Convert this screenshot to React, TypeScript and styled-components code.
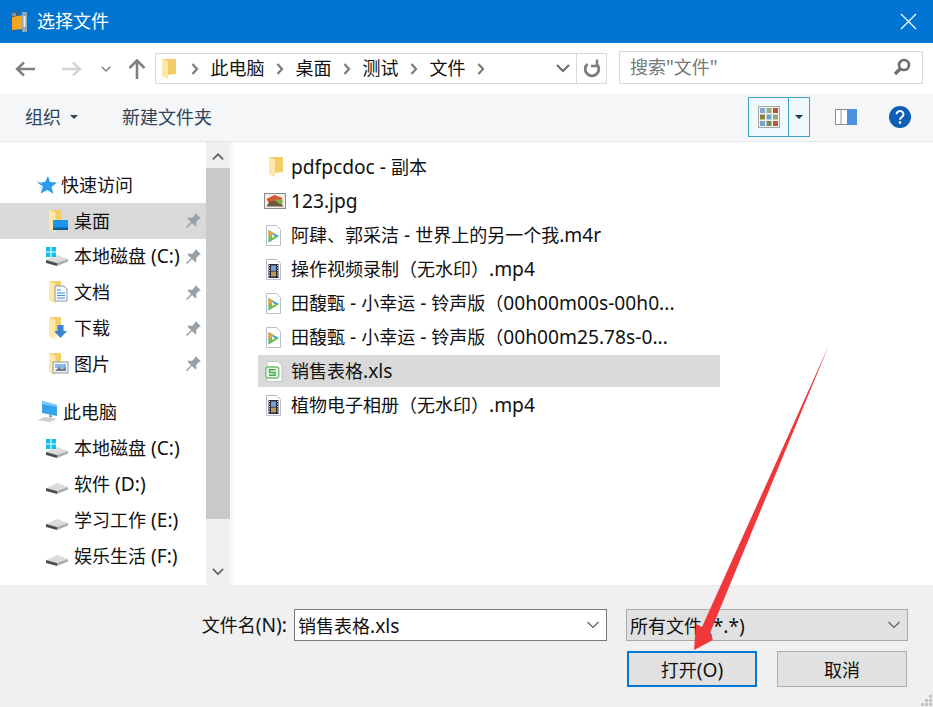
import React from 'react';
import styled, { createGlobalStyle } from 'styled-components';

const GlobalStyle = createGlobalStyle`
  html, body {
    margin: 0;
    padding: 0;
    background: #ffffff;
    overflow: hidden;
  }
  * {
    box-sizing: border-box;
  }
`;

const Dialog = styled.div`
  position: relative;
  width: 933px;
  height: 707px;
  display: flex;
  flex-direction: column;
  overflow: hidden;
  background: #ffffff;
  color: #111111;
  font-family: 'Noto Sans', 'Noto Sans CJK SC', sans-serif;
  font-size: 18px;
`;

// latin runs sit a bit larger than the cjk ones, like segoe ui next to yahei
const LatinRun = styled.span`
  font-size: 19.2px;
`;

const TitleBar = styled.div`
  height: 43px;
  flex: none;
  display: flex;
  align-items: center;
  padding: 0 16px 0 9px;
  background: #0074d0;
  color: #ffffff;
`;

const TitleText = styled.span`
  margin-left: 8px;
  flex: 1;
  font-size: 18px;
  line-height: 24px;
  padding-bottom: 2px;
`;

const NavBar = styled.div`
  height: 51px;
  flex: none;
  display: flex;
  align-items: center;
  padding: 0 10px 0 15px;
`;

const NavIcons = styled.div`
  width: 140px;
  display: flex;
  align-items: center;
`;

const NavSlot = styled.div<{ $width: number }>`
  width: ${(p) => p.$width}px;
  display: flex;
`;

const AddressBox = styled.div`
  width: 452px;
  height: 31px;
  display: flex;
  align-items: center;
  padding-left: 2px;
  border: 1px solid #d9d9d9;
`;

const Crumbs = styled.div`
  flex: 1;
  display: flex;
  align-items: center;
  gap: 11.5px;
  margin-left: 13px;
`;

const CrumbText = styled.span`
  font-size: 18px;
  line-height: 24px;
  padding-bottom: 2px;
`;

const AddressDivider = styled.div`
  width: 30px;
  height: 29px;
  margin-left: 6px;
  display: flex;
  align-items: center;
  justify-content: center;
  border-left: 1px solid #d9d9d9;
`;

const SearchBox = styled.div`
  width: 304px;
  height: 33px;
  margin-left: 12px;
  margin-top: -2px;
  display: flex;
  align-items: center;
  justify-content: space-between;
  padding: 0 11px 2px 10px;
  border: 1px solid #d9d9d9;
  color: #787878;
`;

const Toolbar = styled.div`
  height: 48px;
  flex: none;
  display: flex;
  align-items: center;
  padding: 0 22px 2px 25px;
  background: #f5f6f7;
  border-bottom: 1px solid #e6e6e6;
  color: #2f4358;
`;

const ToolButton = styled.span`
  display: flex;
  align-items: center;
  gap: 9px;
  margin-right: 44px;
  line-height: 24px;
`;

const Caret = styled.span<{ $color: string }>`
  width: 0;
  height: 0;
  border-left: 4px solid transparent;
  border-right: 4px solid transparent;
  border-top: 4px solid ${(p) => p.$color};
`;

const ToolSpacer = styled.div`
  flex: 1;
`;

const ViewButton = styled.div`
  width: 62px;
  height: 40px;
  display: flex;
  background: #f0f9fd;
  border: 1px solid #3fa6c8;
`;

const ViewMain = styled.div`
  width: 40px;
  display: flex;
  align-items: center;
  justify-content: center;
  border-right: 1px solid #3fa6c8;
`;

const ViewDrop = styled.div`
  flex: 1;
  display: flex;
  align-items: center;
  justify-content: center;
`;

const PaneSlot = styled.div`
  margin-left: 25px;
  display: flex;
`;

const HelpSlot = styled.div`
  margin-left: 32px;
  display: flex;
`;

const Body = styled.div`
  flex: 1;
  min-height: 0;
  display: flex;
`;

const Sidebar = styled.div`
  width: 206px;
  flex: none;
  padding-top: 25px;
`;

const TreeRow = styled.div<{ $child?: boolean; $selected?: boolean; $gapAfter?: number }>`
  height: 35.8px;
  display: flex;
  align-items: center;
  padding-left: ${(p) => (p.$child ? 44 : 34)}px;
  padding-right: 4px;
  margin-bottom: ${(p) => p.$gapAfter ?? 0}px;
  background: ${(p) => (p.$selected ? '#d9d9d9' : 'transparent')};
`;

const TreeLabel = styled.span<{ $child?: boolean }>`
  flex: 1;
  margin-left: ${(p) => (p.$child ? 4 : 3)}px;
  line-height: 24px;
  white-space: nowrap;
`;

const Scrollbar = styled.div`
  width: 24px;
  flex: none;
  display: flex;
  flex-direction: column;
  background: #f0f0f0;
`;

const ScrollCap = styled.div<{ $height: number }>`
  height: ${(p) => p.$height}px;
  flex: none;
  display: flex;
  align-items: center;
  justify-content: center;
  padding-top: 4px;
`;

const ScrollThumb = styled.div`
  height: 351px;
  flex: none;
  background: #c9c9c9;
`;

const ScrollTrack = styled.div`
  flex: 1;
`;

const Splitter = styled.div`
  width: 3px;
  flex: none;
  background: #f8f8f8;
`;

const FileList = styled.div`
  flex: 1;
  padding: 9px 0 0 25px;
  display: flex;
  flex-direction: column;
  gap: 2px;
`;

const FileRow = styled.div<{ $selected?: boolean }>`
  width: 462px;
  height: 32px;
  display: flex;
  align-items: center;
  padding-left: 7px;
  background: ${(p) => (p.$selected ? '#d9d9d9' : 'transparent')};
`;

const FileIconSlot = styled.div`
  width: 20px;
  flex: none;
  display: flex;
`;

const FileName = styled.span`
  margin-left: 6px;
  line-height: 24px;
  white-space: nowrap;
`;

const Footer = styled.div`
  position: relative;
  height: 122px;
  flex: none;
  display: flex;
  flex-direction: column;
  gap: 10px;
  padding: 24px 25px 0 0;
  background: #f0f0f0;
`;

const FooterRow = styled.div<{ $inset?: number }>`
  display: flex;
  align-items: center;
  justify-content: flex-end;
  padding-right: ${(p) => p.$inset ?? 0}px;
`;

const FieldLabel = styled.span`
  margin-right: 7px;
  line-height: 24px;
`;

const ComboBox = styled.div<{ $width: number; $filled?: boolean }>`
  width: ${(p) => p.$width}px;
  height: 32px;
  display: flex;
  align-items: center;
  justify-content: space-between;
  padding: 0 6px 0 3px;
  background: ${(p) => (p.$filled ? '#e1e1e1' : '#ffffff')};
  border: 1px solid ${(p) => (p.$filled ? '#a9a9a9' : '#7a7a7a')};
  margin-left: ${(p) => (p.$filled ? 19 : 0)}px;
`;

const DialogButton = styled.div<{ $primary?: boolean }>`
  width: 130px;
  height: 36px;
  display: flex;
  align-items: center;
  justify-content: center;
  margin-left: 20px;
  background: #e1e1e1;
  border: ${(p) => (p.$primary ? '2px solid #0078d7' : '1px solid #adadad')};
`;

const Grip = styled.svg`
  position: absolute;
  right: 1px;
  bottom: 1px;
`;

const Annotation = styled.svg`
  position: absolute;
  left: 0;
  top: 0;
  pointer-events: none;
`;

const Mixed = ({ text }: { text: string }) => (
  <>
    {text.split(/([\x00-\x7f]+)/).map((part, i) =>
      i % 2 === 1 ? <LatinRun key={i}>{part}</LatinRun> : part
    )}
  </>
);

const PlainFolder = () => (
  <svg width="20" height="22" viewBox="0 0 20 22">
    <path d="M4 1h14v15l-14 1.500z" fill="#f2cd68" />
    <path d="M4 1l6 2.500v18l-6-3.500z" fill="#fce9a8" />
  </svg>
);

const TreeFolder = ({ badge }: { badge: 'desktop' | 'docs' | 'down' | 'pics' }) => (
  <svg width="26" height="24" viewBox="0 0 26 24">
    <path d="M5 1h12v17l-12 1z" fill="#f2cd68" />
    <path d="M5 1l6.500 2.500v20l-6.500-3.500z" fill="#fce9a8" />
    {badge === 'desktop' && (
      <>
        <rect x="9" y="11" width="15" height="10" fill="#1c94e8" />
        <rect x="9" y="18.500" width="15" height="2.500" fill="#0d5a9c" />
      </>
    )}
    {badge === 'docs' && (
      <>
        <path d="M11 6h9l3 3v12h-12z" fill="#f6f9fc" stroke="#8a9aaa" />
        <path d="M13 10h4M13 13h8M13 15.500h8M13 18h8" stroke="#4a8fd0" strokeWidth="1.200" />
      </>
    )}
    {badge === 'down' && (
      <path d="M13.500 9h6v6h3.500l-6.500 7-6.500-7h3.500z" fill="#3b83d4" />
    )}
    {badge === 'pics' && (
      <>
        <rect x="9" y="10" width="15" height="11" fill="#f4f6f8" stroke="#8d98a3" />
        <path d="M11 12h11v4h-11z" fill="#8ab8e0" />
        <path d="M11 19l4-4 3 2 4-2v4z" fill="#6e7f8c" />
      </>
    )}
  </svg>
);

const DriveIcon = ({ system }: { system?: boolean }) => (
  <svg width="26" height="24" viewBox="0 0 26 24">
    <path d="M2 16l11-5 11 4-11 4z" fill="#dcdcdc" />
    <path d="M2 16l11 3v3l-11-3z" fill="#4a4e52" />
    <path d="M13 19l11-4v2.500l-11 4.500z" fill="#a8aaac" />
    {system && (
      <g fill="#16bde4">
        <rect x="2" y="3" width="4.500" height="4.500" />
        <rect x="7.500" y="3" width="4.500" height="4.500" />
        <rect x="2" y="8.500" width="4.500" height="4.500" />
        <rect x="7.500" y="8.500" width="4.500" height="4.500" />
      </g>
    )}
  </svg>
);

const StarIcon = () => (
  <svg width="24" height="20" viewBox="0 0 24 20">
    <path d="M14 1l2 6 7 .5-5.500 4.500 2 7-6-4-7 3.500 2.500-7-6-4 8-.500z" fill="#2b9bee" />
    <path d="M3 6l5 2.500M5 13l3-1" stroke="#a8d8f8" strokeWidth="1" />
  </svg>
);

const ComputerIcon = () => (
  <svg width="26" height="24" viewBox="0 0 26 24">
    <path d="M8 1l15 4v11l-15-3z" fill="#36a3ea" />
    <path d="M8 1l15 4v2l-15-3z" fill="#7ccaf5" />
    <path d="M15 15l3 .600v2l-3-.600z" fill="#8a9199" />
    <path d="M3 20l8-3 12 2-7 3z" fill="#c9ced3" />
  </svg>
);

const PinIcon = () => (
  <svg width="17" height="17" viewBox="0 0 17 17">
    <path d="M10.500 1l5.500 5.500-2 .500-3 3 .500 3.500-1 1-3.500-3.500-5 5-1-1 5-5-3.500-3.500 1-1 3.500.500 3-3z" fill="#97a0a8" />
  </svg>
);

const DocFrame = () => (
  <path d="M1.500 1.500h10l4 4v16h-14z" fill="#ffffff" stroke="#b9bfc6" />
);

const VideoIcon = () => (
  <svg width="20" height="23" viewBox="0 0 20 23">
    <DocFrame />
    <path d="M3.500 6l10.500 6-10.500 6.500z" fill="#27a9e8" />
    <path d="M3.500 6l5.500 3.200-5.500 5z" fill="#f2a12c" />
    <path d="M3.500 18.500l1-6.500 9.500 0z" fill="#76c23a" />
    <path d="M7 10.300l3 1.900-3 1.900z" fill="#ffffff" />
  </svg>
);

const FilmIcon = () => (
  <svg width="20" height="23" viewBox="0 0 20 23">
    <DocFrame />
    <rect x="3.500" y="6" width="10" height="14" fill="#2a2d36" />
    <rect x="6" y="7.500" width="5" height="5.200" fill="#7fa0d8" />
    <rect x="6" y="13.500" width="5" height="5" fill="#b59a5c" />
    <path d="M4.500 7v12M12.500 7v12" stroke="#d8d8d8" strokeWidth="1" strokeDasharray="1 1.500" />
  </svg>
);

const ImageFileIcon = () => (
  <svg width="22" height="16" viewBox="0 0 22 16" style={{ flex: 'none', marginLeft: -1 }}>
    <rect x="0.500" y="0.500" width="21" height="15" fill="#f0eeea" stroke="#8c8c8c" />
    <path d="M2.500 6l8-4 8 3-3 5-10 1z" fill="#d8562c" />
    <path d="M2.500 13.500l3-5 9-1 5 6z" fill="#6b5a3c" />
    <path d="M10 6.500l8.500 0v5l-4-1z" fill="#86ac4e" />
  </svg>
);

const SheetIcon = () => (
  <svg width="20" height="23" viewBox="0 0 20 23">
    <path d="M2 1.500h11l4 4v16h-15z" fill="#ffffff" stroke="#c2c6c2" />
    <rect x="0.800" y="7" width="13" height="11" rx="2.500" fill="#eef8ec" stroke="#6cc070" strokeWidth="1.300" />
    <path d="M10.500 9.700h-6v2.800h5.500v2.800h-6" fill="none" stroke="#47ab50" strokeWidth="1.500" />
  </svg>
);

const Chevron = ({ color, size = 14, up }: { color: string; size?: number; up?: boolean }) => (
  <svg width={size} height={size * 0.6} viewBox="0 0 14 8.400">
    <path d={up ? 'M1 7.500l6-6 6 6' : 'M1 1l6 6 6-6'} fill="none" stroke={color} strokeWidth="2" />
  </svg>
);

const ThinChevron = () => (
  <svg width="14" height="8" viewBox="0 0 14 8">
    <path d="M1.500 1l5.500 5.500 5.500-5.500" fill="none" stroke="#5f5f5f" strokeWidth="1.200" />
  </svg>
);

const CrumbArrow = () => (
  <svg width="8" height="12" viewBox="0 0 8 12">
    <path d="M1.500 1l4.500 5-4.500 5" fill="none" stroke="#7b7b7b" strokeWidth="2.200" />
  </svg>
);

const BackArrow = ({ color, flip }: { color: string; flip?: boolean }) => (
  <svg width="20" height="16" viewBox="0 0 20 16" style={flip ? { transform: 'scaleX(-1)' } : undefined}>
    <path d="M9 1.500l-7 6.500 7 6.500M2 8h18" fill="none" stroke={color} strokeWidth="2.400" />
  </svg>
);

const UpArrow = () => (
  <svg width="18" height="20" viewBox="0 0 18 20">
    <path d="M1.500 9l7.500-7.500 7.500 7.500M9 2v18" fill="none" stroke="#808080" strokeWidth="2.600" />
  </svg>
);

const RefreshIcon = () => (
  <svg width="18" height="19" viewBox="0 0 18 19">
    <path d="M4.500 5a6.800 6.800 0 1 0 9 0" fill="none" stroke="#7c7c7c" strokeWidth="2.800" />
    <path d="M14 0.500v6.500h-6" fill="none" stroke="#7c7c7c" strokeWidth="2.400" />
  </svg>
);

const SearchIcon = () => (
  <svg width="18" height="18" viewBox="0 0 18 18">
    <circle cx="11" cy="7" r="5" fill="#ffffff" stroke="#6c6c6c" strokeWidth="2.600" />
    <path d="M7 11l-5 5" stroke="#6c6c6c" strokeWidth="3.200" />
  </svg>
);

const ThumbGridIcon = () => {
  const colors = ['#7fa6cc', '#a0a878', '#b8543c', '#8c8040', '#6fa4cc', '#98aa68', '#7fa2c8', '#7c8a58', '#b85a40'];
  return (
    <svg width="22" height="22" viewBox="0 0 22 22">
      <rect x="0.500" y="0.500" width="21" height="21" fill="#f2f2f2" stroke="#a8a8a8" />
      {colors.map((color, i) => (
        <rect key={i} x={2 + (i % 3) * 6.500} y={2 + Math.floor(i / 3) * 6.500} width="5" height="5" fill={color} />
      ))}
    </svg>
  );
};

const PaneIcon = () => (
  <svg width="22" height="18" viewBox="0 0 22 18">
    <rect x="0.500" y="1.500" width="21" height="15" fill="#ffffff" stroke="#8c8c8c" />
    <path d="M6 1.500v15" stroke="#9a9a9a" />
    <rect x="12" y="1" width="10" height="16" fill="#4a90dc" />
  </svg>
);

const HelpIcon = () => (
  <svg width="22" height="22" viewBox="0 0 22 22">
    <circle cx="11" cy="11" r="11" fill="#0c5fb4" />
    <path d="M7.500 8.300a3.500 3.200 0 1 1 5.600 2.500c-1.300 1-2.100 1.500-2.100 3" fill="none" stroke="#ffffff" strokeWidth="2" />
    <rect x="9.900" y="15.300" width="2.200" height="2.400" fill="#ffffff" />
  </svg>
);

const AppIcon = () => (
  <svg width="20" height="24" viewBox="0 0 20 24">
    <path d="M2 3l7-2v18l-7 3z" fill="#4e5a66" />
    <path d="M3 7l11-2v14l-11 1z" fill="#f2a81e" />
    <rect x="13" y="2" width="5" height="20" fill="#8fa6bd" />
    <rect x="14.500" y="6" width="2" height="11" fill="#e6edf3" />
    <rect x="3" y="3" width="4" height="3" fill="#7f93a8" />
  </svg>
);

const CloseIcon = () => (
  <svg width="17" height="17" viewBox="0 0 17 17">
    <path d="M1 1l15 15M16 1l-15 15" stroke="#ffffff" strokeWidth="1.200" />
  </svg>
);

const crumbs = ['此电脑', '桌面', '测试', '文件'];

const quickAccess = [
  { label: '桌面', icon: <TreeFolder badge="desktop" />, selected: true },
  { label: '本地磁盘 (C:)', icon: <DriveIcon system /> },
  { label: '文档', icon: <TreeFolder badge="docs" /> },
  { label: '下载', icon: <TreeFolder badge="down" /> },
  { label: '图片', icon: <TreeFolder badge="pics" /> },
];

const drives = [
  { label: '本地磁盘 (C:)', system: true },
  { label: '软件 (D:)' },
  { label: '学习工作 (E:)' },
  { label: '娱乐生活 (F:)' },
];

const files = [
  { name: 'pdfpcdoc - 副本', icon: <PlainFolder /> },
  { name: '123.jpg', icon: <ImageFileIcon /> },
  { name: '阿肆、郭采洁 - 世界上的另一个我.m4r', icon: <VideoIcon /> },
  { name: '操作视频录制（无水印）.mp4', icon: <FilmIcon /> },
  { name: '田馥甄 - 小幸运 - 铃声版（00h00m00s-00h0...', icon: <VideoIcon /> },
  { name: '田馥甄 - 小幸运 - 铃声版（00h00m25.78s-0...', icon: <VideoIcon /> },
  { name: '销售表格.xls', icon: <SheetIcon />, selected: true },
  { name: '植物电子相册（无水印）.mp4', icon: <FilmIcon /> },
];

const App = () => {
  return (
    <Dialog>
      <GlobalStyle />
      <TitleBar>
        <AppIcon />
        <TitleText>选择文件</TitleText>
        <CloseIcon />
      </TitleBar>
      <NavBar>
        <NavIcons>
          <NavSlot $width={47}>
            <BackArrow color="#808080" />
          </NavSlot>
          <NavSlot $width={39}>
            <BackArrow color="#d5d5d5" flip />
          </NavSlot>
          <NavSlot $width={27}>
            <Chevron color="#808080" size={10} />
          </NavSlot>
          <NavSlot $width={27}>
            <UpArrow />
          </NavSlot>
        </NavIcons>
        <AddressBox>
          <PlainFolder />
          <Crumbs>
            <CrumbArrow />
            {crumbs.map((crumb) => (
              <React.Fragment key={crumb}>
                <CrumbText>{crumb}</CrumbText>
                <CrumbArrow />
              </React.Fragment>
            ))}
          </Crumbs>
          <Chevron color="#6a6a6a" size={14} />
          <AddressDivider>
            <RefreshIcon />
          </AddressDivider>
        </AddressBox>
        <SearchBox>
          <span>
            <Mixed text={'搜索"文件"'} />
          </span>
          <SearchIcon />
        </SearchBox>
      </NavBar>
      <Toolbar>
        <ToolButton>
          组织
          <Caret $color="#2f4358" />
        </ToolButton>
        <ToolButton>新建文件夹</ToolButton>
        <ToolSpacer />
        <ViewButton>
          <ViewMain>
            <ThumbGridIcon />
          </ViewMain>
          <ViewDrop>
            <Caret $color="#1d3557" />
          </ViewDrop>
        </ViewButton>
        <PaneSlot>
          <PaneIcon />
        </PaneSlot>
        <HelpSlot>
          <HelpIcon />
        </HelpSlot>
      </Toolbar>
      <Body>
        <Sidebar>
          <TreeRow>
            <StarIcon />
            <TreeLabel>快速访问</TreeLabel>
          </TreeRow>
          {quickAccess.map((item, i) => (
            <TreeRow
              key={item.label}
              $child
              $selected={item.selected}
              $gapAfter={i === quickAccess.length - 1 ? 12 : 0}
            >
              {item.icon}
              <TreeLabel $child>
                <Mixed text={item.label} />
              </TreeLabel>
              <PinIcon />
            </TreeRow>
          ))}
          <TreeRow $gapAfter={1}>
            <ComputerIcon />
            <TreeLabel>此电脑</TreeLabel>
          </TreeRow>
          {drives.map((drive) => (
            <TreeRow key={drive.label} $child>
              <DriveIcon system={drive.system} />
              <TreeLabel $child>
                <Mixed text={drive.label} />
              </TreeLabel>
            </TreeRow>
          ))}
        </Sidebar>
        <Scrollbar>
          <ScrollCap $height={26}>
            <Chevron color="#606060" size={12} up />
          </ScrollCap>
          <ScrollThumb />
          <ScrollTrack />
          <ScrollCap $height={30}>
            <Chevron color="#606060" size={12} />
          </ScrollCap>
        </Scrollbar>
        <Splitter />
        <FileList>
          {files.map((file) => (
            <FileRow key={file.name} $selected={file.selected}>
              <FileIconSlot>{file.icon}</FileIconSlot>
              <FileName>
                <Mixed text={file.name} />
              </FileName>
            </FileRow>
          ))}
        </FileList>
      </Body>
      <Footer>
        <FooterRow>
          <FieldLabel>
            <Mixed text="文件名(N):" />
          </FieldLabel>
          <ComboBox $width={313}>
            <span>
              <Mixed text="销售表格.xls" />
            </span>
            <ThinChevron />
          </ComboBox>
          <ComboBox $width={282} $filled>
            <span>
              <Mixed text="所有文件 (*.*)" />
            </span>
            <ThinChevron />
          </ComboBox>
        </FooterRow>
        <FooterRow $inset={1}>
          <DialogButton $primary>
            <Mixed text="打开(O)" />
          </DialogButton>
          <DialogButton>取消</DialogButton>
        </FooterRow>
        <Grip width="11" height="11" viewBox="0 0 11 11">
          <g fill="#c4c4c4">
            <rect x="8" y="0" width="3" height="3" />
            <rect x="4" y="4" width="3" height="3" />
            <rect x="8" y="4" width="3" height="3" />
            <rect x="0" y="8" width="3" height="3" />
            <rect x="4" y="8" width="3" height="3" />
            <rect x="8" y="8" width="3" height="3" />
          </g>
        </Grip>
      </Footer>
      <Annotation width="933" height="707" viewBox="0 0 933 707">
        <path d="M829 345L710 633L713 640L694 650L696 624L702 627Z" fill="#f0383c" />
      </Annotation>
    </Dialog>
  );
};

export default App;
